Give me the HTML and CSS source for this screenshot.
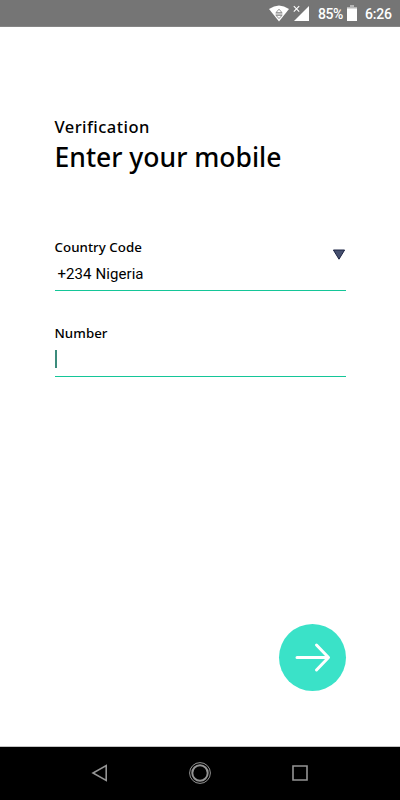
FILE: index.html
```html
<!DOCTYPE html>
<html lang="en">
<head>
<meta charset="utf-8">
<title>Verification</title>
<link rel="stylesheet" href="styles.css">
</head>
<body>
<div class="screen">
  <header class="status">
    <svg class="wifi" width="20" height="17" viewBox="0 0 20 17"><path fill="#fff" d="M0 4Q10-3 20 4L10 16.5Z"/><path d="M7 7.6 10 4.2l3 3.4ZM6.5 9h7M7 10.4 10 13.6l3-3.2Z" fill="none" stroke="#777" stroke-width=".8"/></svg>
    <svg class="signal" width="17" height="17" viewBox="0 0 17 17"><path fill="#fff" d="M16 1v15H1Z"/><path d="M.8 1.2 6.2 6.6M6.2 1.2.8 6.6" stroke="#757575" stroke-width="3"/><path d="M.8 1.2 6.2 6.6M6.2 1.2.8 6.6" stroke="#fff" stroke-width="1.1"/></svg>
    <span class="percent">85%</span>
    <svg class="battery" width="10" height="17" viewBox="0 0 10 17"><path fill="#b5b5b5" d="M3 0h4v2h3v2H0V2h3Z"/><path fill="#fff" d="M0 3.5h10V16H0Z"/></svg>
    <span class="time">6:26</span>
  </header>
  <main class="content">
    <p class="eyebrow">Verification</p>
    <h1 class="title">Enter your mobile</h1>
    <section class="field country">
      <div class="label">Country Code</div>
      <div class="value">+234 Nigeria</div>
      <svg class="caret" width="14" height="12" viewBox="0 0 14 12"><path d="M1.4 1h11.2L7 10.2Z" fill="#46506f" stroke="#1d2444" stroke-width="1"/></svg>
    </section>
    <section class="field number">
      <div class="label">Number</div>
      <div class="cursor"></div>
    </section>
    <button class="next" aria-label="Next"><svg width="67" height="67" viewBox="0 0 67 67"><path d="M18 33.5h31M37.5 21 49.5 33.5 37.5 46" fill="none" stroke="#fff" stroke-width="3" stroke-linecap="round" stroke-linejoin="round"/></svg></button>
  </main>
  <nav class="navbar">
    <svg width="24" height="24" viewBox="0 0 24 24"><path d="M18.2 4.6v14.8L5 12Z"/></svg>
    <svg width="24" height="24" viewBox="0 0 24 24"><circle cx="12" cy="12" r="10.4" stroke-width="1"/><circle cx="12" cy="12" r="7.7" stroke-width="2"/></svg>
    <svg width="24" height="24" viewBox="0 0 24 24"><path d="M5 5h14v14H5Z"/></svg>
  </nav>
</div>
</body>
</html>
```
FILE: styles.css
```css
* { box-sizing: border-box; }
body { margin: 0; background: #fff; color: #000; font-family: "Noto Sans", sans-serif; }
.screen { height: 800px; display: flex; flex-direction: column; overflow: hidden; }
.status { height: 27px; background: #757575; border-bottom: 1px solid #858585; display: flex; align-items: center; padding: 1px 9px 0 0; justify-content: flex-end; color: #fff; font: 500 14px/26px Roboto, sans-serif; }
.wifi { margin-right: 4px; }
.signal { margin-right: 8px; }
.percent { width: 25px; margin-right: 4px; letter-spacing: -.5px; }
.battery { margin-right: 8px; }
.time { width: 26px; letter-spacing: -.2px; }
.content { flex: 1; padding: 89px 54.5px 0 54.5px; display: flex; flex-direction: column; }
.eyebrow { margin: 0; font-size: 16.5px; line-height: 22px; font-weight: 500; letter-spacing: .45px; }
.title { margin: 1px 0 0; font-size: 26.5px; line-height: 36px; font-weight: 480; white-space: nowrap; }
.field { position: relative; border-bottom: 1px solid #14c698; }
.country { margin-top: 63px; height: 53px; }
.number { margin-top: 33px; height: 53px; }
.label { font-size: 13.3px; line-height: 18px; font-weight: 500; letter-spacing: .05px; }
.value { font: 400 15px/20px Roboto, sans-serif; padding: 8px 0 0 3px; letter-spacing: .08px; }
.caret { position: absolute; right: -.5px; top: 11px; }
.cursor { width: 2px; height: 18px; margin-top: 8px; background: #3c8c7c; }
.next { align-self: flex-end; margin: auto 0 55px; width: 67px; height: 67px; border: 0; padding: 0; border-radius: 50%; background: #3ae2c8; }
.next svg { display: block; }
.navbar { height: 54px; background: #000; border-top: 1px solid #c4c4c4; display: flex; justify-content: center; align-items: center; gap: 76px; padding-bottom: 1px; }
.navbar svg { fill: none; stroke: #949494; stroke-width: 1.6; }
```
